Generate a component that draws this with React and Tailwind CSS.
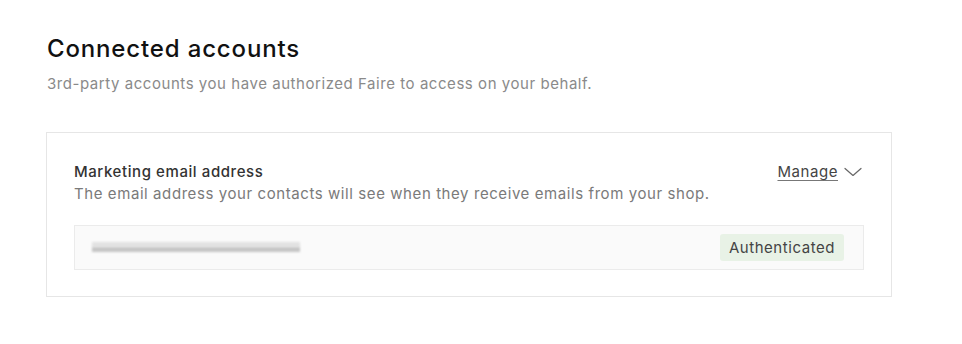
function ChevronIcon() {
    return (
        <svg width="18" height="10" viewBox="0 0 18 10" fill="none" className="text-[#666]">
            <path d="M1 1.5 L9 8.5 L17 1.5" stroke="currentColor" strokeWidth="1.2" strokeLinecap="round" strokeLinejoin="round" />
        </svg>
    );
}

function App() {
    return (
        <main className="w-[962px] h-[344px] bg-white font-['Inter',sans-serif] px-[47px] pt-[34px]">
            <h1 className="text-[24px] leading-[30px] font-medium text-[#111] tracking-[0.85px]">Connected accounts</h1>
            <p className="mt-[10px] text-[15px] leading-[20px] text-[#8a8a8a] tracking-[0.55px]">3rd-party accounts you have authorized Faire to access on your behalf.</p>

            <section className="mt-[38px] -ml-px w-[846px] h-[165px] border border-[#e6e6e6] px-[27px] pt-[29px]">
                <div className="flex justify-between items-start">
                    <div className="tracking-[0.58px] text-[15px] leading-[20px]">
                        <h2 className="font-medium text-[#333]">Marketing email address</h2>
                        <p className="mt-[2px] text-[#7a7a7a]">The email address your contacts will see when they receive emails from your shop.</p>
                    </div>
                    <button className="flex items-center gap-[6px] text-[15px] leading-[20px] tracking-[0.55px] text-[#444] pr-[2px]">
                        <span className="underline underline-offset-[3px] decoration-[#777]">Manage</span>
                        <ChevronIcon />
                    </button>
                </div>
                <div className="mt-[21px] h-[45px] border border-[#ebebeb] bg-[#fafafa] flex items-center justify-between pl-[17px] pr-[19px]">
                    <div className="relative w-[215px] h-[14px]">
                        <div className="absolute left-0 top-[1px] w-[208px] h-[5px] bg-[#e2e2e2] blur-[1px]" />
                        <div className="absolute left-0 top-[6px] w-[208px] h-[5px] bg-[#c6c6c6] blur-[1px]" />
                    </div>
                    <span className="px-[9px] py-[4px] bg-[#e8f2e6] rounded-[3px] text-[15px] leading-[19px] tracking-[0.55px] text-[#444]">Authenticated</span>
                </div>
            </section>
        </main>
    );
}

export default App;
